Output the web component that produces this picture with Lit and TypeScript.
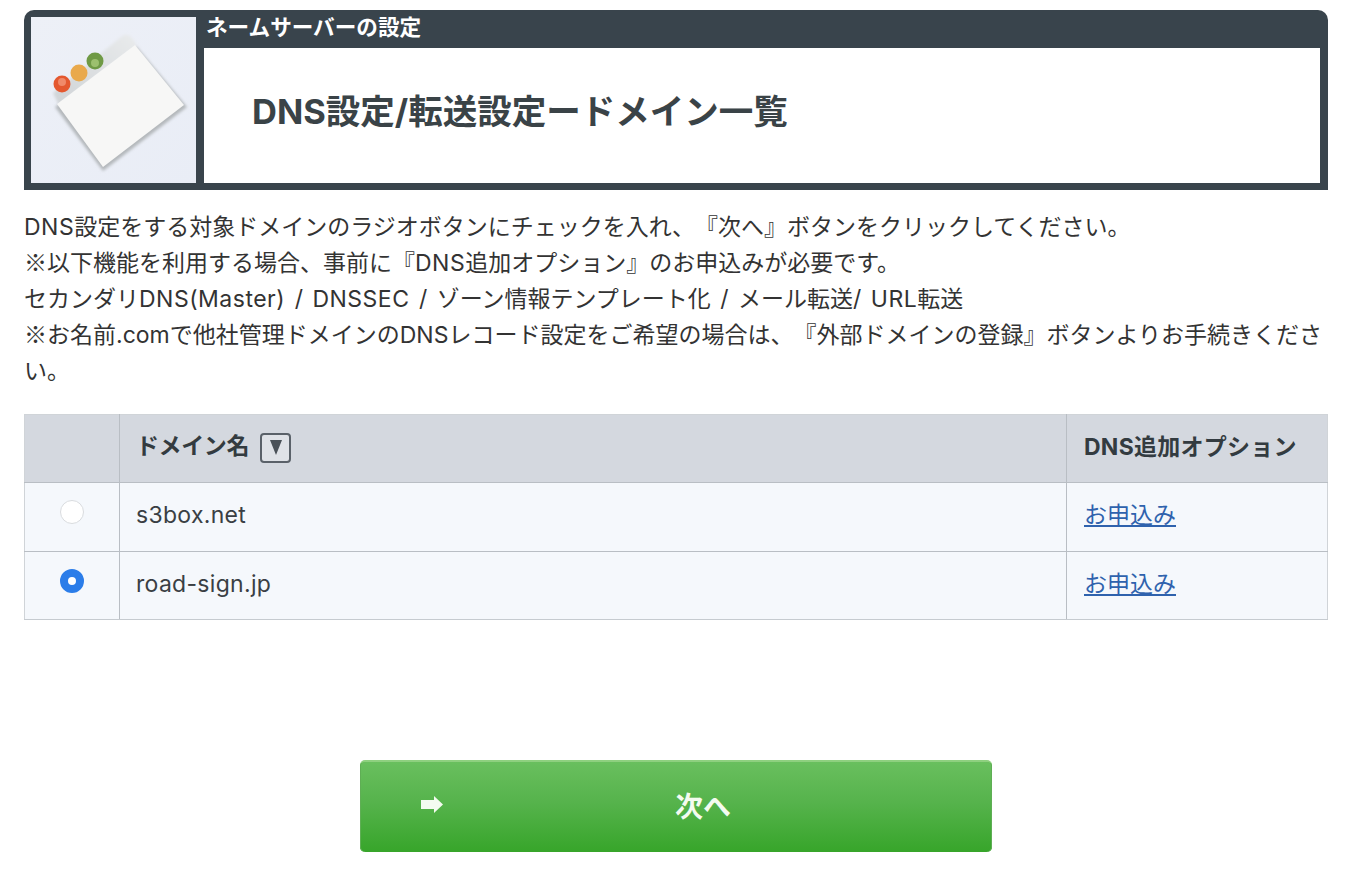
import { LitElement, html, css } from "lit";
import { customElement } from "lit/decorators.js";

@customElement("app-root")
export class AppRoot extends LitElement {
  static styles = css`
    :host {
      display: block;
      width: 1358px;
      height: 878px;
      overflow: hidden;
      background: #fff;
      font-family: "Inter", "Noto Sans CJK JP", sans-serif;
      color: #333b40;
      box-sizing: border-box;
      padding: 10px 30px 0 24px;
      text-spacing-trim: space-all;
    }
    * { box-sizing: border-box; }
    .panel {
      height: 180px;
      background: #39444c;
      border-radius: 10px 10px 0 0;
      padding: 7px 8px 7px 7px;
      display: flex;
      gap: 8px;
    }
    .icon {
      width: 165px;
      height: 166px;
      background: linear-gradient(135deg, #edf0f7, #e9edf6);
      flex: none;
    }
    .icon svg { display: block; }
    .main { flex: 1; display: flex; flex-direction: column; }
    .eyebrow {
      height: 31px;
      color: #fff;
      font-size: 21.6px;
      font-weight: 700;
      line-height: 21px;
      padding-left: 2px;
      white-space: nowrap;
    }
    .titlebox {
      flex: 1;
      background: #fff;
      display: flex;
      align-items: center;
      padding: 0 0 8px 48px;
    }
    h1 {
      margin: 0;
      font-size: 34.5px;
      line-height: 44px;
      font-weight: 700;
      color: #3a4347;
      white-space: nowrap;
    }
    .intro {
      margin: 19px 0 0;
      font-size: 23px;
      line-height: 36px;
      color: #333;
      word-spacing: 3px;
    }
    .lat { letter-spacing: 0.5px; }
    .cjk { font-family: "Noto Sans CJK JP", sans-serif; line-height: 0; }
    table {
      margin-top: 25px;
      width: 100%;
      height: 206px;
      border-collapse: collapse;
      table-layout: fixed;
      font-size: 23px;
      line-height: 30px;
    }
    th, td { border: 1px solid #b9bec4; padding: 0 16px 3px 17px; text-align: left; }
    th:first-child, td:first-child { border-left-color: #d0d4d8; }
    th:last-child, td:last-child { border-right-color: #d0d4d8; }
    th { border-top-color: #d0d4d8; }
    tbody tr:last-child td { border-bottom-color: #c6cbd0; }
    thead tr { height: 68px; }
    tbody tr { height: 68px; }
    th {
      background: #d4d8df;
      font-weight: 700;
      color: #333b40;
      white-space: nowrap;
    }
    td { background: #f5f8fc; color: #3a3f44; }
    .c1 { width: 95px; padding: 0; text-align: center; }
    .c2 { padding-left: 16px; }
    .c3 { width: 261px; }
    .th2 { letter-spacing: -0.4px; }
    th.c3 { letter-spacing: 0.25px; }
    .name { letter-spacing: 0.3px; }
    .sort {
      display: inline-flex;
      align-items: center;
      justify-content: center;
      width: 31px;
      height: 30px;
      margin: 0 0 0 11px;
      vertical-align: middle;
      border: 2px solid #5a6169;
      border-radius: 4px;
      background: #dfe2e7;
    }
    .radio {
      display: block;
      margin: -9px auto 0;
      width: 24px;
      height: 24px;
      border-radius: 50%;
      background: #fff;
      border: 1px solid #d9dcdf;
    }
    .radio.on {
      border: 8px solid #2b7de9;
    }
    a { color: #2f62ad; text-decoration: underline; }
    .actions { display: flex; justify-content: center; margin-top: 140px; }
    .btn {
      width: 632px;
      height: 92px;
      border-radius: 5px;
      border: none;
      border-top: 2px solid #8ed07f;
      box-shadow: inset 1px 0 0 #5fae55, inset -1px 0 0 #5fae55;
      background: linear-gradient(#69bf5e, #56b34c 45%, #37a52a);
      color: #f4fbf0;
      font: 700 28px "Noto Sans CJK JP", sans-serif;
      display: flex;
      align-items: center;
      padding: 0 0 4px 60px;
    }
    .btn svg { flex: none; }
    .btn span { margin-left: 231px; }
  `;

  render() {
    return html`
      <div class="panel">
        <div class="icon">
          <svg width="165" height="166" viewBox="0 0 165 166">
            <defs>
              <linearGradient id="bar" x1="0" y1="1" x2="1" y2="0">
                <stop offset="0" stop-color="#cfd3d6" />
                <stop offset="1" stop-color="#e9ebec" />
              </linearGradient>
              <filter id="soft" x="-20%" y="-20%" width="140%" height="140%">
                <feGaussianBlur stdDeviation="1.6" />
              </filter>
            </defs>
            <path d="M24 90 L105 29 L156 90 L72 154Z" fill="#b4b8bb" filter="url(#soft)" />
            <path d="M22 76 L90 20 Q96 15 101 21 L106 28 L28 88Z" fill="url(#bar)" filter="url(#soft)" />
            <path d="M26 87 L104 28 L153 88 L72 150Z" fill="#f7f7f6" />
            <circle cx="31" cy="67" r="8.5" fill="#e4582f" />
            <circle cx="31" cy="65" r="4" fill="#f08a6a" />
            <circle cx="48" cy="56" r="8.5" fill="#e9a94c" />
            <circle cx="64" cy="44" r="8.5" fill="#6f9a45" />
            <circle cx="64" cy="46" r="4" fill="#9cc06e" />
          </svg>
        </div>
        <div class="main">
          <div class="eyebrow">ネームサーバーの設定</div>
          <div class="titlebox"><h1>DNS設定/転送設定ードメイン一覧</h1></div>
        </div>
      </div>
      <p class="intro">
        <span class="lat">DNS</span>設定をする対象ドメインのラジオボタンにチェックを入れ、『次へ』ボタンをクリックしてください。<br />
        <span class="cjk">※</span>以下機能を利用する場合、事前に『<span class="lat">DNS</span>追加オプション』のお申込みが必要です。<br />
        セカンダリ<span class="lat">DNS(Master)</span> / <span class="lat">DNSSEC</span> / ゾーン情報テンプレート化 / メール転送/ <span class="lat">URL</span>転送<br />
        <span class="cjk">※</span>お名前.comで他社管理ドメインのDNSレコード設定をご希望の場合は、『外部ドメインの登録』ボタンよりお手続きください。
      </p>
      <table>
        <thead>
          <tr>
            <th class="c1"></th>
            <th class="c2 th2">ドメイン名<span class="sort"><svg width="14" height="17" viewBox="0 0 14 17"><path d="M1 1H13L7 16Z" fill="#4a5158" /></svg></span></th>
            <th class="c3">DNS追加オプション</th>
          </tr>
        </thead>
        <tbody>
          <tr>
            <td class="c1"><span class="radio"></span></td>
            <td class="c2 name">s3box.net</td>
            <td><a>お申込み</a></td>
          </tr>
          <tr>
            <td class="c1"><span class="radio on"></span></td>
            <td class="c2 name">road-sign.jp</td>
            <td><a>お申込み</a></td>
          </tr>
        </tbody>
      </table>
      <div class="actions">
        <div class="btn">
          <svg width="24" height="20" viewBox="0 0 24 20"><path d="M1 5H14V1L23 9.5L14 18V14H1Z" fill="#f4fbf0" /></svg>
          <span>次へ</span>
        </div>
      </div>
    `;
  }
}
